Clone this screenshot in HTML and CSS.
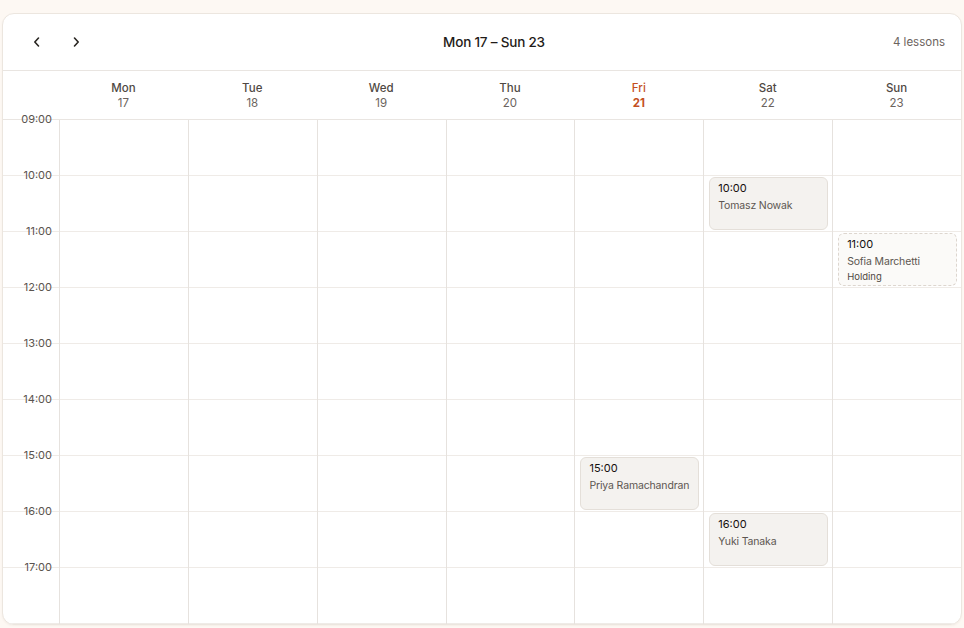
FILE: index.html
```html
<!DOCTYPE html>
<html>
<head>
<meta charset="utf-8">
<link rel="stylesheet" href="styles.css">
</head>
<body>
<div class="card">
  <div class="toolbar">
    <div class="nav">
      <button class="navbtn" aria-label="Previous week">
        <svg width="10" height="12" viewBox="0 0 10 12"><path d="M6.5 2 L2.8 6 L6.5 10" fill="none" stroke="#2a2622" stroke-width="1.6" stroke-linecap="round" stroke-linejoin="round"/></svg>
      </button>
      <button class="navbtn" aria-label="Next week">
        <svg width="10" height="12" viewBox="0 0 10 12"><path d="M3.5 2 L7.2 6 L3.5 10" fill="none" stroke="#2a2622" stroke-width="1.6" stroke-linecap="round" stroke-linejoin="round"/></svg>
      </button>
    </div>
    <div class="title">Mon 17 – Sun 23</div>
    <div class="count">4 lessons</div>
  </div>

  <div class="dayhead">
    <div class="gutter"></div>
    <div class="dh"><span class="dname">Mon</span><span class="dnum">17</span></div>
    <div class="dh"><span class="dname">Tue</span><span class="dnum">18</span></div>
    <div class="dh"><span class="dname">Wed</span><span class="dnum">19</span></div>
    <div class="dh"><span class="dname">Thu</span><span class="dnum">20</span></div>
    <div class="dh today"><span class="dname">Fri</span><span class="dnum">21</span></div>
    <div class="dh"><span class="dname">Sat</span><span class="dnum">22</span></div>
    <div class="dh"><span class="dname">Sun</span><span class="dnum">23</span></div>
  </div>

  <div class="body">
    <div class="times">
      <div class="hour"><span class="tl">09:00</span></div>
      <div class="hour"><span class="tl">10:00</span></div>
      <div class="hour"><span class="tl">11:00</span></div>
      <div class="hour"><span class="tl">12:00</span></div>
      <div class="hour"><span class="tl">13:00</span></div>
      <div class="hour"><span class="tl">14:00</span></div>
      <div class="hour"><span class="tl">15:00</span></div>
      <div class="hour"><span class="tl">16:00</span></div>
      <div class="hour"><span class="tl">17:00</span></div>
    </div>
    <div class="col"><div class="slot"></div><div class="slot"></div><div class="slot"></div><div class="slot"></div><div class="slot"></div><div class="slot"></div><div class="slot"></div><div class="slot"></div><div class="slot"></div></div>
    <div class="col"><div class="slot"></div><div class="slot"></div><div class="slot"></div><div class="slot"></div><div class="slot"></div><div class="slot"></div><div class="slot"></div><div class="slot"></div><div class="slot"></div></div>
    <div class="col"><div class="slot"></div><div class="slot"></div><div class="slot"></div><div class="slot"></div><div class="slot"></div><div class="slot"></div><div class="slot"></div><div class="slot"></div><div class="slot"></div></div>
    <div class="col"><div class="slot"></div><div class="slot"></div><div class="slot"></div><div class="slot"></div><div class="slot"></div><div class="slot"></div><div class="slot"></div><div class="slot"></div><div class="slot"></div></div>
    <div class="col">
      <div class="slot"></div><div class="slot"></div><div class="slot"></div><div class="slot"></div><div class="slot"></div><div class="slot"></div>
      <div class="slot"><div class="event"><span class="etime">15:00</span><span class="ename">Priya Ramachandran</span></div></div>
      <div class="slot"></div><div class="slot"></div>
    </div>
    <div class="col">
      <div class="slot"></div>
      <div class="slot"><div class="event"><span class="etime">10:00</span><span class="ename">Tomasz Nowak</span></div></div>
      <div class="slot"></div><div class="slot"></div><div class="slot"></div><div class="slot"></div><div class="slot"></div>
      <div class="slot"><div class="event"><span class="etime">16:00</span><span class="ename">Yuki Tanaka</span></div></div>
      <div class="slot"></div>
    </div>
    <div class="col">
      <div class="slot"></div><div class="slot"></div>
      <div class="slot"><div class="event holding"><span class="etime">11:00</span><span class="ename">Sofia Marchetti</span><span class="estatus">Holding</span></div></div>
      <div class="slot"></div><div class="slot"></div><div class="slot"></div><div class="slot"></div><div class="slot"></div><div class="slot"></div>
    </div>
  </div>
</div>
</body>
</html>
```

FILE: styles.css
```css
* { box-sizing: border-box; }
html, body { margin: 0; padding: 0; }
body {
  background: #fdf8f3;
  font-family: Inter, "Liberation Sans", sans-serif;
  color: #2a2622;
  padding: 13px 2px 3px 2px;
}
.card {
  width: 960px;
  height: 612px;
  background: #ffffff;
  border: 1px solid #ece6df;
  border-radius: 12px;
  overflow: hidden;
  box-shadow: 0 1px 2px rgba(120, 90, 60, 0.06);
}
.toolbar {
  height: 57px;
  display: flex;
  align-items: center;
  justify-content: space-between;
  padding: 0 16px 0 24px;
  border-bottom: 1px solid #e9e5e1;
}
.nav { display: flex; gap: 19px; width: 68px; }
.navbtn {
  width: 20px; height: 24px;
  border: none; background: transparent; padding: 0;
  display: flex; align-items: center; justify-content: center;
}
.title {
  font-size: 13.5px;
  font-weight: 500;
  color: #1f1b18;
  letter-spacing: -0.2px;
}
.count {
  text-align: right;
  font-size: 11.5px;
  color: #6b635d;
}
.dayhead {
  display: grid;
  grid-template-columns: 56px repeat(7, 1fr);
  height: 49px;
  border-bottom: 1px solid #e9e5e1;
}
.dh {
  display: flex;
  flex-direction: column;
  align-items: center;
  justify-content: center;
  gap: 1px;
  font-size: 11.5px;
  line-height: 14px;
  padding-top: 1px;
}
.dname { color: #4f4843; font-weight: 500; }
.dnum { color: #6b635d; }
.dh.today .dname { color: #c4501f; }
.dh.today .dnum { color: #c4501f; font-weight: 700; }
.body {
  display: grid;
  grid-template-columns: 56px repeat(7, 1fr);
}
.times .hour {
  height: 56px;
  border-bottom: 1px solid #efebe7;
  position: relative;
}
.tl {
  position: absolute;
  top: -8px;
  right: 7px;
  font-size: 11px;
  line-height: 14px;
  color: #5a534e;
}
.col { border-left: 1px solid #e6e2de; }
.slot {
  height: 56px;
  border-bottom: 1px solid #efebe7;
  padding: 1px 4px 1px 5px;
}
.event {
  height: 100%;
  background: #f4f2ef;
  border: 1px solid #e4dfd9;
  border-radius: 6px;
  padding: 3px 8px;
  display: flex;
  flex-direction: column;
  overflow: hidden;
}
.event.holding {
  background: #fbfaf8;
  border: 1px dashed #ddd6cf;
}
.etime {
  font-size: 11px;
  line-height: 14px;
  font-weight: 400;
  color: #141110;
}
.ename {
  font-size: 10.5px;
  line-height: 14px;
  margin-top: 4px;
  color: #5d5651;
  white-space: nowrap;
  letter-spacing: -0.15px;
}
.estatus {
  font-size: 9.5px;
  line-height: 12px;
  margin-top: 2px;
  color: #4f4843;
}
```
